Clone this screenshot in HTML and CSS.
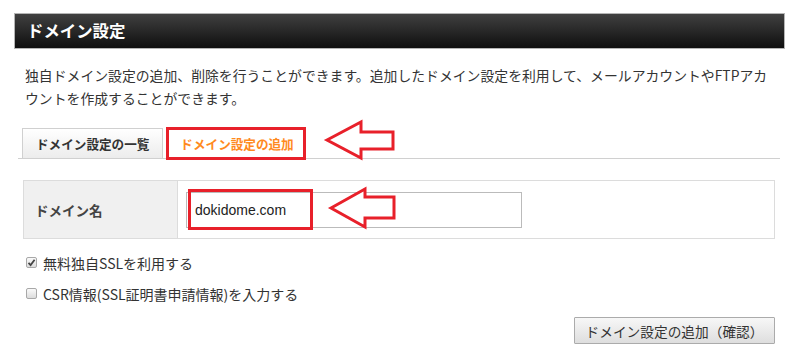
FILE: index.html
```html
<!DOCTYPE html>
<html lang="ja">
<head>
<meta charset="utf-8">
<title>ドメイン設定</title>
<link rel="stylesheet" href="styles.css">
</head>
<body>
<div class="page">
  <h1 class="panel-title">ドメイン設定</h1>
  <p class="desc">独自ドメイン設定の追加、削除を行うことができます。追加したドメイン設定を利用して、メールアカウントやFTPアカウントを作成することができます。</p>
  <div class="tabs">
    <div class="tab">ドメイン設定の一覧</div>
    <div class="tab tab-active">ドメイン設定の追加</div>
  </div>
  <div class="form-table">
    <div class="label-cell">ドメイン名</div>
    <div class="value-cell">
      <div class="input-box">dokidome.com</div>
    </div>
  </div>
  <div class="options">
    <label class="opt"><span class="cb"><svg width="9" height="9" viewBox="0 0 9 9"><path d="M1.5 4.8 L3.6 7 L7.6 1.8" fill="none" stroke="#444" stroke-width="1.8"/></svg></span>無料独自SSLを利用する</label>
    <label class="opt"><span class="cb"></span>CSR情報(SSL証明書申請情報)を入力する</label>
  </div>
  <div class="actions">
    <button class="btn">ドメイン設定の追加（確認）</button>
  </div>
  <svg class="annotations" width="800" height="358" viewBox="0 0 800 358">
    <rect x="167.5" y="128.5" width="137" height="30" fill="none" stroke="#e8202a" stroke-width="3"/>
    <rect x="189.5" y="190.5" width="122" height="38" fill="none" stroke="#e8202a" stroke-width="3"/>
    <polygon points="327,140 361,122 361,132 393,132 393,149 361,149 361,158" fill="#fff" stroke="#e8202a" stroke-width="3" stroke-linejoin="miter"/>
    <polygon points="331,208 365,189 365,197 394,197 394,218 365,218 365,227" fill="#fff" stroke="#e8202a" stroke-width="3" stroke-linejoin="miter"/>
  </svg>
</div>
</body>
</html>
```
FILE: styles.css
```css
* { box-sizing: border-box; }
html, body { margin: 0; padding: 0; background: #fff; }
body {
  font-family: "Noto Sans CJK JP", "Noto Sans", sans-serif;
  color: #333;
  width: 800px;
  height: 358px;
  overflow: hidden;
}
.page { position: relative; width: 800px; height: 358px; padding-top: 13px; }
.panel-title {
  margin: 0 15px 0 14px;
  height: 36px;
  border: 1px solid #b5b5b5;
  background: linear-gradient(#404040, #0f0f0f);
  color: #fff;
  font-size: 16.4px;
  font-weight: bold;
  line-height: 33px;
  padding-left: 12px;
}
.desc {
  margin: 15px 0 0 25px;
  width: 752px;
  font-size: 13.85px;
  line-height: 23px;
  color: #333;
}
.tabs {
  display: flex;
  align-items: flex-end;
  margin: 17px 20px 0 18px;
  padding-left: 4px;
  border-bottom: 1px solid #d0d0d0;
  height: 32px;
}
.tab {
  height: 31px;
  margin-bottom: -1px;
  padding: 0 13px;
  border: 1px solid #d0d0d0;
  border-bottom: 1px solid #d0d0d0;
  background: linear-gradient(#ffffff, #ececec);
  font-size: 12.6px;
  font-weight: bold;
  line-height: 30px;
  color: #333;
  white-space: nowrap;
}
.tab-active {
  margin-left: 5px;
  padding: 0 11px;
  background: #fff;
  border-bottom-color: #fff;
  color: #ff8a1e;
}
.form-table {
  display: flex;
  margin: 21px 25px 0 23px;
  height: 59px;
  border: 1px solid #dcdcdc;
}
.label-cell {
  width: 154px;
  background: #f0f0f0;
  border-right: 1px solid #dcdcdc;
  display: flex;
  align-items: center;
  padding-left: 11px;
  font-size: 13.5px;
  font-weight: bold;
  color: #444;
}
.value-cell {
  flex: 1;
  display: flex;
  align-items: center;
  padding-left: 8px;
}
.input-box {
  width: 336px;
  height: 36px;
  border: 1px solid #bbb;
  padding-left: 8px;
  font-family: "Liberation Sans", Arial, sans-serif;
  font-size: 14px;
  line-height: 34px;
  color: #222;
}
.options {
  margin: 14px 0 0 26px;
  display: flex;
  flex-direction: column;
  gap: 11px;
}
.opt {
  display: flex;
  align-items: center;
  height: 20px;
  font-size: 14px;
  color: #333;
}
.cb {
  width: 11px;
  height: 11px;
  margin-right: 6px;
  margin-top: -2px;
  border: 1px solid #a8a8a8;
  border-radius: 2px;
  background: linear-gradient(#fafafa, #dcdcdc);
  display: flex;
  align-items: center;
  justify-content: center;
}
.cb svg { display: block; }
.actions {
  display: flex;
  justify-content: flex-end;
  margin: 13px 25px 0 0;
}
.btn {
  width: 201px;
  height: 27px;
  border: 1px solid #ababab;
  border-radius: 1px;
  background: linear-gradient(#f7f7f7, #dedede);
  font-family: "Noto Sans CJK JP", sans-serif;
  font-size: 13.7px;
  color: #333;
  padding: 0;
}
.annotations {
  position: absolute;
  top: 0;
  left: 0;
  pointer-events: none;
}
```
